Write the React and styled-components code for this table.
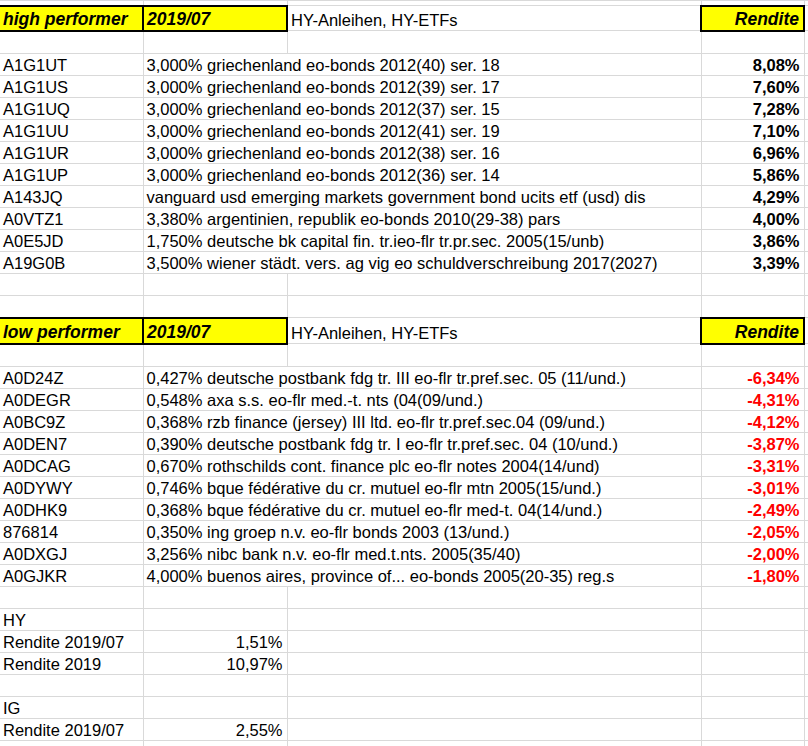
import React from "react";
import styled, { createGlobalStyle } from "styled-components";

const Global = createGlobalStyle`
  html, body {
    margin: 0;
    padding: 0;
    background: #fff;
    overflow: hidden;
  }
  body {
    font-family: "Liberation Sans", Arial, sans-serif;
  }
`;

const Sheet = styled.table`
  border-collapse: collapse;
  table-layout: fixed;
  width: 824px;
  font-family: "Liberation Sans", Arial, sans-serif;
  font-size: 16.5px;
  color: #000;
`;

const Row = styled.tr`
  height: ${(p) => p.$h || 22}px;
`;

const Cell = styled.td`
  border: 1px solid #d9d9d9;
  border-left: ${(p) => (p.$first ? "none" : "1px solid #d9d9d9")};
  padding: 0 4px 1px 3px;
  line-height: 18px;
  vertical-align: bottom;
  white-space: nowrap;
  overflow: visible;
  text-align: ${(p) => (p.$right ? "right" : "left")};
  font-weight: ${(p) => (p.$bold ? 700 : 400)};
  color: ${(p) => (p.$neg ? "#ff0000" : "#000")};
`;

const HeadCell = styled(Cell)`
  background: #ffff00;
  border: 2px solid #000;
  border-left: ${(p) => (p.$first ? "none" : "2px solid #000")};
  font-size: 17.5px;
  font-weight: 700;
  font-style: italic;
  padding-bottom: 2px;
`;

const high = [
  ["A1G1UT", "3,000% griechenland eo-bonds 2012(40) ser. 18", "8,08%"],
  ["A1G1US", "3,000% griechenland eo-bonds 2012(39) ser. 17", "7,60%"],
  ["A1G1UQ", "3,000% griechenland eo-bonds 2012(37) ser. 15", "7,28%"],
  ["A1G1UU", "3,000% griechenland eo-bonds 2012(41) ser. 19", "7,10%"],
  ["A1G1UR", "3,000% griechenland eo-bonds 2012(38) ser. 16", "6,96%"],
  ["A1G1UP", "3,000% griechenland eo-bonds 2012(36) ser. 14", "5,86%"],
  ["A143JQ", "vanguard usd emerging markets government bond ucits etf (usd) dis", "4,29%"],
  ["A0VTZ1", "3,380% argentinien, republik eo-bonds 2010(29-38) pars", "4,00%"],
  ["A0E5JD", "1,750% deutsche bk capital fin. tr.ieo-flr tr.pr.sec. 2005(15/unb)", "3,86%"],
  ["A19G0B", "3,500% wiener städt. vers. ag vig eo schuldverschreibung 2017(2027)", "3,39%"],
];

const low = [
  ["A0D24Z", "0,427% deutsche postbank fdg tr. III eo-flr tr.pref.sec. 05 (11/und.)", "-6,34%"],
  ["A0DEGR", "0,548% axa s.s. eo-flr med.-t. nts (04(09/und.)", "-4,31%"],
  ["A0BC9Z", "0,368% rzb finance (jersey) III ltd. eo-flr tr.pref.sec.04 (09/und.)", "-4,12%"],
  ["A0DEN7", "0,390% deutsche postbank fdg tr. I eo-flr tr.pref.sec. 04 (10/und.)", "-3,87%"],
  ["A0DCAG", "0,670% rothschilds cont. finance plc eo-flr notes 2004(14/und)", "-3,31%"],
  ["A0DYWY", "0,746% bque fédérative du cr. mutuel eo-flr mtn 2005(15/und.)", "-3,01%"],
  ["A0DHK9", "0,368% bque fédérative du cr. mutuel eo-flr med-t. 04(14/und.)", "-2,49%"],
  ["876814", "0,350% ing groep n.v. eo-flr bonds 2003 (13/und.)", "-2,05%"],
  ["A0DXGJ", "3,256% nibc bank n.v. eo-flr med.t.nts. 2005(35/40)", "-2,00%"],
  ["A0GJKR", "4,000% buenos aires, province of... eo-bonds 2005(20-35) reg.s", "-1,80%"],
];

function Blank({ h }) {
  return (
    <Row $h={h}>
      <Cell $first />
      <Cell />
      <Cell />
      <Cell />
      <Cell />
    </Row>
  );
}

function Header({ label, h }) {
  return (
    <Row $h={h}>
      <HeadCell $first>{label}</HeadCell>
      <HeadCell>2019/07</HeadCell>
      <Cell>HY-Anleihen, HY-ETFs</Cell>
      <HeadCell $right>Rendite</HeadCell>
      <Cell />
    </Row>
  );
}

function Bonds({ rows, neg }) {
  return rows.map(([wkn, name, val]) => (
    <Row key={wkn}>
      <Cell $first>{wkn}</Cell>
      <Cell colSpan={2}>{name}</Cell>
      <Cell $right $bold $neg={neg}>
        {val}
      </Cell>
      <Cell />
    </Row>
  ));
}

function Summary({ label, value }) {
  return (
    <Row>
      <Cell $first>{label}</Cell>
      <Cell $right>{value}</Cell>
      <Cell />
      <Cell />
      <Cell />
    </Row>
  );
}

export default function App() {
  return (
    <>
      <Global />
      <Sheet>
        <colgroup>
          <col style={{ width: 143 }} />
          <col style={{ width: 144 }} />
          <col style={{ width: 414 }} />
          <col style={{ width: 103 }} />
          <col style={{ width: 20 }} />
        </colgroup>
        <tbody>
          <Blank h={5} />
          <Header label="high performer" h={25} />
          <Blank h={23} />
          <Bonds rows={high} />
          <Blank />
          <Blank />
          <Header label="low performer" h={26} />
          <Blank h={23} />
          <Bonds rows={low} neg />
          <Blank />
          <Summary label="HY" />
          <Summary label="Rendite 2019/07" value="1,51%" />
          <Summary label="Rendite 2019" value="10,97%" />
          <Blank />
          <Summary label="IG" />
          <Summary label="Rendite 2019/07" value="2,55%" />
          <Blank />
        </tbody>
      </Sheet>
    </>
  );
}
